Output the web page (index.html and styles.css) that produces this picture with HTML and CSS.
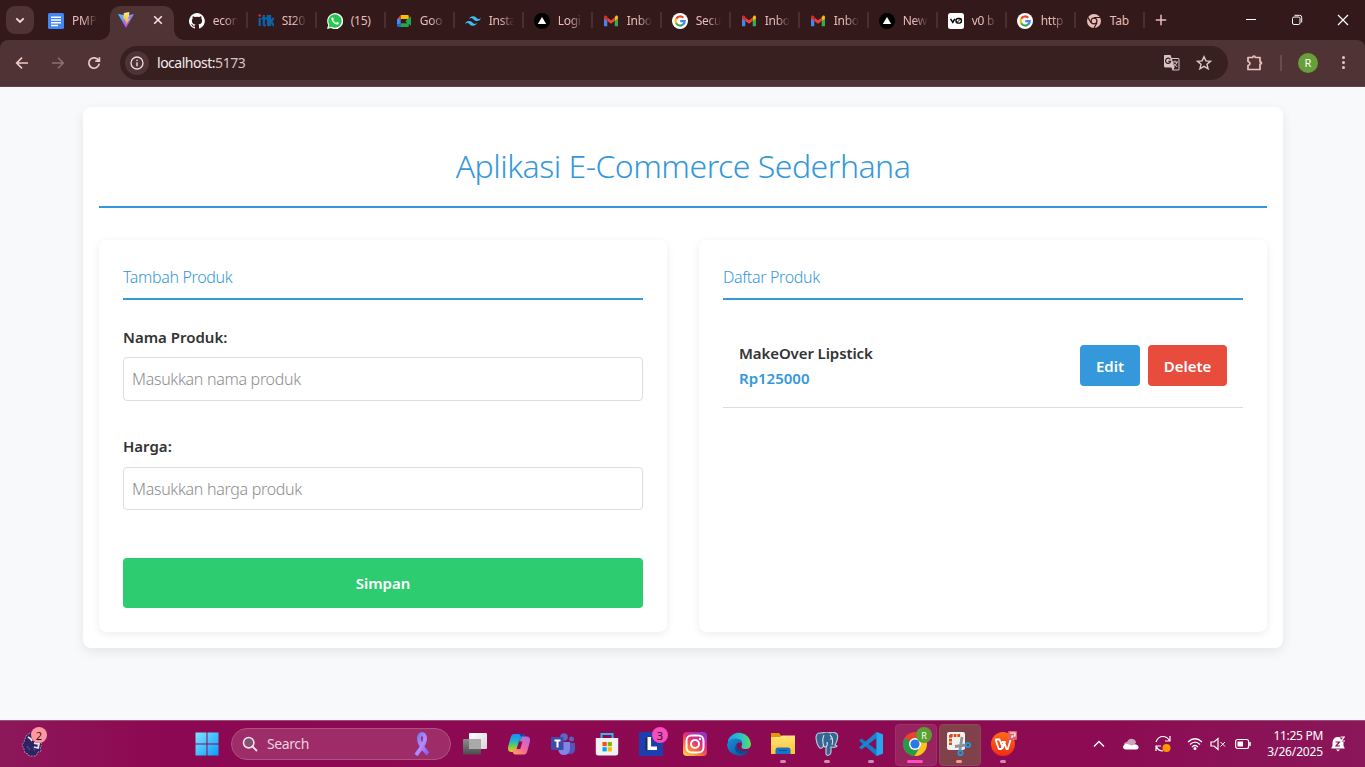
FILE: index.html
```html
<!DOCTYPE html>
<html lang="id">
<head>
<meta charset="utf-8">
<title>Aplikasi E-Commerce Sederhana</title>
<link rel="stylesheet" href="styles.css">
</head>
<body>
<svg class="defs" aria-hidden="true">
  <defs>
    <linearGradient id="vite-a" x1="0" y1="0" x2=".6" y2="1"><stop offset="0" stop-color="#41d1ff"/><stop offset="1" stop-color="#bd34fe"/></linearGradient>
    <linearGradient id="vite-b" x1="0" y1="0" x2="0" y2="1"><stop offset="0" stop-color="#ffea83"/><stop offset="1" stop-color="#ffa800"/></linearGradient>
    <linearGradient id="win" x1="0" y1="0" x2="1" y2="1"><stop offset="0" stop-color="#7fe4ff"/><stop offset="1" stop-color="#0a9bfd"/></linearGradient>
    <linearGradient id="ribbon" x1="0" y1="0" x2="1" y2="1"><stop offset="0" stop-color="#6a78e8"/><stop offset=".5" stop-color="#b38bff"/><stop offset="1" stop-color="#8a55f0"/></linearGradient>
    <linearGradient id="cop-a" x1="0" y1="0" x2="0" y2="1"><stop offset="0" stop-color="#1d8df5"/><stop offset=".4" stop-color="#1fb5c9"/><stop offset=".7" stop-color="#7ccb4a"/><stop offset="1" stop-color="#f6c320"/></linearGradient>
    <linearGradient id="cop-b" x1="1" y1="0" x2="0" y2="1"><stop offset="0" stop-color="#a66cf0"/><stop offset=".5" stop-color="#f2679b"/><stop offset="1" stop-color="#ffa552"/></linearGradient>
    <linearGradient id="ig" x1=".1" y1="1" x2=".8" y2="0"><stop offset="0" stop-color="#ffd34e"/><stop offset=".3" stop-color="#fb7a35"/><stop offset=".6" stop-color="#e42c78"/><stop offset="1" stop-color="#8a3ac8"/></linearGradient>
    <linearGradient id="edge-a" x1="0" y1="0" x2="1" y2="0"><stop offset="0" stop-color="#1d9fe0"/><stop offset=".6" stop-color="#2cc4c8"/><stop offset="1" stop-color="#66dc54"/></linearGradient>
    <linearGradient id="edge-b" x1="0" y1="0" x2="1" y2="1"><stop offset="0" stop-color="#1b8fdc"/><stop offset="1" stop-color="#0c4a92"/></linearGradient>
    <linearGradient id="folder" x1="0" y1="0" x2="0" y2="1"><stop offset="0" stop-color="#ffe27a"/><stop offset="1" stop-color="#ffc52f"/></linearGradient>
    <linearGradient id="view-a" x1="0" y1="0" x2="1" y2="1"><stop offset="0" stop-color="#fff"/><stop offset="1" stop-color="#d8d4d6"/></linearGradient>
    <linearGradient id="view-b" x1="0" y1="0" x2="0" y2="1"><stop offset="0" stop-color="#8d8d8d"/><stop offset="1" stop-color="#4c4c4c"/></linearGradient>
    <linearGradient id="wps" x1="0" y1="0" x2="0" y2="1"><stop offset="0" stop-color="#ff6a1c"/><stop offset="1" stop-color="#f22b12"/></linearGradient>
    <symbol id="google" viewBox="0 0 16 16"><circle cx="8" cy="8" r="8" fill="#fff"/><g fill="none" stroke-width="2.2"><path d="M4.2 5.7A4.5 4.5 0 0 1 11.3 4.8" stroke="#ea4335"/><path d="M4.2 5.7a4.6 4.6 0 0 0 0 4.6" stroke="#fbbc05"/><path d="M4.2 10.3A4.5 4.5 0 0 0 11.2 11.3" stroke="#34a853"/><path d="M8.2 8.1h4.5a4.6 4.6 0 0 1-1.6 3.3" stroke="#4285f4"/></g></symbol>
    <symbol id="gmail" viewBox="0 0 16 16"><path d="M1 4.6v8.7h3.3V7z" fill="#4285f4"/><path d="M15 4.6v8.7h-3.3V7z" fill="#34a853"/><path d="M11.7 4.5V8L15 5.6V4.2c0-1.5-1.5-2-2.5-1.3z" fill="#fbbc04"/><path d="M4.3 8V4.4L8 7.2l3.7-2.8V8L8 10.8z" fill="#ea4335"/><path d="M1 4.2c0-1.5 1.5-2 2.500-1.300l.8.6V8L1 5.600z" fill="#d93025"/></symbol>
    <symbol id="vercel" viewBox="0 0 16 16"><circle cx="8" cy="8" r="8" fill="#000"/><path d="M8 4l4.2 7H3.8z" fill="#fff"/></symbol>
  </defs>
</svg>

<div class="screen">
  <header class="tabstrip">
    <div class="tab-search"><svg width="12" height="12" viewBox="0 0 12 12"><path d="M2.300 4.300 6 8l3.700-3.700" fill="none" stroke="#f4dcd9" stroke-width="1.800"/></svg></div>
    <div class="tab tab-first"><svg viewBox="0 0 16 16"><rect width="16" height="16" rx="1.500" fill="#4285f4"/><path d="M3 4.200h10M3 7h10M3 9.800h10M3 12.600h7" stroke="#fff" stroke-width="1.500"/></svg><span>PMP</span></div>
    <div class="tab-active"><svg class="fav" viewBox="0 0 16 16"><path d="M0 2.100 8 16l8-13.900-7.800 1.300z" fill="url(#vite-a)"/><path d="M11.400 0 5.800 1.100l-.4 6.200 1.900-.4-.6 2.700 1.600-.5-.9 4.500 4.700-7-2 .4.8-2.700z" fill="url(#vite-b)"/></svg><svg class="close" viewBox="0 0 10 10"><path d="M1.200 1.200l7.600 7.600M8.800 1.200 1.200 8.800" stroke="#f6e2e0" stroke-width="1.600"/></svg></div>
    <div class="tab"><svg viewBox="0 0 16 16"><path fill="#fff" d="M8 0a8 8 0 0 0-2.500 15.600c.4.1.5-.2.5-.4v-1.500c-2.200.5-2.700-.9-2.700-.9-.4-.9-.9-1.200-.9-1.200-.7-.5.1-.5.1-.5.8.1 1.200.8 1.200.8.7 1.200 1.900.9 2.300.7.1-.5.3-.9.5-1.100-1.800-.2-3.600-.9-3.600-4 0-.9.3-1.600.8-2.100-.1-.2-.4-1 .1-2.100 0 0 .7-.2 2.200.8a7.500 7.500 0 0 1 4 0c1.500-1 2.200-.8 2.200-.8.4 1.100.2 1.900.1 2.100.5.6.8 1.300.8 2.100 0 3.100-1.900 3.700-3.700 3.900.3.3.6.8.6 1.500v2.200c0 .2.1.5.6.4A8 8 0 0 0 8 0z"/></svg><span>econ</span></div>
    <div class="tab"><svg viewBox="0 0 16 16"><g fill="none" stroke="#0c62a7" stroke-width="2.300"><path d="M1.700 5v8M5.800 2v9.500q0 1 2 .8M3.700 5.300h5M10 2v9.500q0 .8 1 .8M8.500 5.300h3M12 2v11M16 5l-3 3 3 5"/></g><circle cx="1.700" cy="2.500" r="1.300" fill="#e6232b"/></svg><span>SI20</span></div>
    <div class="tab"><svg viewBox="0 0 16 16"><path d="M0 16l1.200-4A8 8 0 1 1 4 14.900z" fill="#fff"/><path d="M1.600 14.400l.7-2.800a6.700 6.700 0 1 1 2.300 2.200z" fill="#25c74e"/><path d="M5.700 4.300c-.8 0-1.700 1.100-1.200 2.500.8 2.200 2.700 4 5 4.700 1.300.3 2.500-.5 2.300-1.800L10 8.700l-.9 1C7.700 9.100 6.700 8 6.200 7l.8-.9z" fill="#fff"/></svg><span class="tab-label">(15)</span></div>
    <div class="tab"><svg viewBox="0 0 16 16"><path d="M1 6.200 4.800 2v4.200z" fill="#ea4335"/><path d="M4.800 2h7q1 0 1 1v4l-2-1H4.800z" fill="#fbbc04"/><path d="M1 6h3.700v5.500H1z" fill="#4285f4"/><path d="M1 11h4v3H2q-1 0-1-1z" fill="#1967d2"/><path d="M4.700 10.300H11L9.500 8 15 3.300v9.400L12.800 11v2q0 1-1 1H4.700z" fill="#21a84a"/></svg><span>Goo</span></div>
    <div class="tab"><svg viewBox="0 0 16 16"><path fill="#38bdf8" d="M4 6.400Q5 3.200 8 3.200c3.200 0 3.600 2.400 5.200 2.800 1 .3 2-.2 2.800-1.200Q15 8 12 8C8.800 8 8.400 5.600 6.800 5.200c-1-.3-2 .2-2.800 1.200zM0 11.200Q1 8 4 8c3.200 0 3.600 2.400 5.200 2.800 1 .3 2-.2 2.800-1.200q-1 3.200-4 3.200c-3.200 0-3.600-2.400-5.200-2.800-1-.3-2 .2-2.800 1.200z"/></svg><span>Insta</span></div>
    <div class="tab"><svg><use href="#vercel"/></svg><span>Logi</span></div>
    <div class="tab"><svg><use href="#gmail"/></svg><span>Inbo</span></div>
    <div class="tab"><svg><use href="#google"/></svg><span>Secu</span></div>
    <div class="tab"><svg><use href="#gmail"/></svg><span>Inbo</span></div>
    <div class="tab"><svg><use href="#gmail"/></svg><span>Inbo</span></div>
    <div class="tab"><svg><use href="#vercel"/></svg><span>New</span></div>
    <div class="tab"><svg viewBox="0 0 16 16"><rect width="16" height="16" rx="2.500" fill="#fff"/><path d="M2.500 5.800l2.300 3.500 2-3.500" fill="none" stroke="#000" stroke-width="1.500"/><rect x="8" y="5.500" width="5.400" height="4.600" rx="2" fill="none" stroke="#000" stroke-width="1.400"/><path d="M8.800 9.700l4-4" stroke="#000"/></svg><span>v0 b</span></div>
    <div class="tab"><svg><use href="#google"/></svg><span>http</span></div>
    <div class="tab"><svg viewBox="0 0 16 16"><circle cx="8" cy="8" r="7" fill="#e8bdb9"/><path d="M8 4.500h6.500M5 9.700 1.800 4.200M11 9.700 8 15" stroke="#33191a" stroke-width="1.200"/><circle cx="8" cy="8" r="3.500" fill="#33191a"/><circle cx="8" cy="8" r="2.300" fill="#e8bdb9"/></svg><span class="tab-label">Tab</span></div>
    <div class="new-tab"><svg width="12" height="12" viewBox="0 0 12 12"><path d="M6 .8v10.400M.8 6h10.400" stroke="#e8bdb9" stroke-width="1.500"/></svg></div>
    <div class="window-buttons">
      <svg viewBox="0 0 12 12"><path d="M1 5.500h10" stroke="#fff"/></svg>
      <svg viewBox="0 0 12 12"><rect x="1.500" y="3" width="7.500" height="7.500" rx="1.500" fill="none" stroke="#fff"/><path d="M3.500 1.300h5.200a2 2 0 0 1 2 2v5.200" fill="none" stroke="#fff"/></svg>
      <svg viewBox="0 0 12 12"><path d="M1 1l10 10M11 1 1 11" stroke="#fff" stroke-width="1.200"/></svg>
    </div>
  </header>

  <div class="toolbar">
    <svg class="nav" viewBox="0 0 16 16"><path d="M14 8H3M8 2.700 2.700 8 8 13.300" fill="none" stroke="#efc9c6" stroke-width="1.700"/></svg>
    <svg class="nav dim" viewBox="0 0 16 16"><path d="M2 8h11M8 2.700 13.300 8 8 13.300" fill="none" stroke="#efc9c6" stroke-width="1.500"/></svg>
    <svg class="nav" viewBox="0 0 16 16"><path d="M12.600 5.500A5.200 5.200 0 1 0 13.200 8.700M13.400 2.200v4H9.300" fill="none" stroke="#efc9c6" stroke-width="1.700"/></svg>
    <div class="omnibox">
      <div class="site-info"><svg width="14" height="14" viewBox="0 0 14 14"><circle cx="7" cy="7" r="6" fill="none" stroke="#eadedd" stroke-width="1.300"/><path d="M7 6.200v4M7 3.700v1.400" stroke="#eadedd" stroke-width="1.400"/></svg></div>
      <div class="url">localhost:<span>5173</span></div>
      <svg class="translate" viewBox="0 0 18 18"><path d="M1.500 1h6l1 3H15q1.500 0 1.500 1.500v9.500q0 1.500-1.500 1.500H9.500l-1-3h-6Q1 13.500 1 12V1.500z" fill="#d5c5c4"/><path d="M9 5h6.500v10.500h-5l1-2z" fill="#382020"/><path d="M7.300 5.300a2.600 2.600 0 1 0 .4 2H5.300" fill="none" stroke="#382020" stroke-width="1.200"/><path d="M9 8h6M12 6.500V8M14 8q-.7 3-3 4.500M10.700 9.500l3.500 3.500" fill="none" stroke="#d5c5c4"/></svg>
      <svg class="star" viewBox="0 0 16 16"><path d="M8 1.700l1.900 4.200 4.600.4-3.500 3 1.100 4.500L8 11.400l-4.100 2.400L5 9.300l-3.500-3 4.600-.4z" fill="none" stroke="#dccbca" stroke-width="1.400"/></svg>
    </div>
    <svg class="extensions" viewBox="0 0 18 18"><path d="M2 3.500h4.800c.1-2 2.300-2 2.400 0H14v4.300c2 .1 2 2.300 0 2.400v5.300H2v-4c2.600-.5 2.600-3.500 0-4z" fill="none" stroke="#efc2be" stroke-width="1.700" stroke-linejoin="round"/></svg>
    <i class="tool-divider"></i>
    <div class="avatar">R</div>
    <div class="more"><i></i><i></i><i></i></div>
  </div>

  <main class="page">
    <div class="container">
      <h1>Aplikasi E-Commerce Sederhana</h1>
      <div class="columns">
        <section class="card">
          <h2 class="form-title">Tambah Produk</h2>
          <form>
            <label class="name-label" for="nama">Nama Produk:</label>
            <input class="name-input" id="nama" placeholder="Masukkan nama produk">
            <label class="price-label" for="harga">Harga:</label>
            <input class="price-input" id="harga" placeholder="Masukkan harga produk">
            <button class="save" type="button">Simpan</button>
          </form>
        </section>
        <section class="card">
          <h2 class="list-title">Daftar Produk</h2>
          <div class="product">
            <div class="product-info"><div class="product-name">MakeOver Lipstick</div><div class="product-price">Rp125000</div></div>
            <button class="edit" type="button">Edit</button>
            <button class="delete" type="button">Delete</button>
          </div>
        </section>
      </div>
    </div>
  </main>

  <footer class="taskbar">
    <div class="widget"><svg width="24" height="26" viewBox="0 0 24 26"><path d="M5 5l4-3 9 3 1 5 2 4-2 2 1 4-3 1-2 4H8l-1-2-3-1-1-4-2-4 2-3z" fill="#2c2360" stroke="#b69cc4" stroke-width=".8" stroke-dasharray="2 1"/><path d="M7 6l3 2 1 2M13 12l5 1-1 4-4-1" fill="none" stroke="#e9e4f5" stroke-width="1.800"/><path d="M6 15l3 4m3-3 2 4" stroke="#50408c" stroke-width="1.500"/></svg><b class="badge two">2</b></div>
    <div class="start"><svg width="24" height="24" viewBox="0 0 24 24"><path d="M.5.500h11v11H.5zM12.500.500h11v11h-11zM.5 12.500h11v11H.5zM12.500 12.500h11v11h-11z" fill="url(#win)"/></svg></div>
    <div class="search"><svg width="16" height="16" viewBox="0 0 16 16"><circle cx="6.700" cy="6.700" r="5.200" fill="#875071" stroke="#f1e5ec" stroke-width="1.600"/><path d="M10.500 10.500 15 15" stroke="#f1e5ec" stroke-width="1.800"/></svg><span>Search</span><svg class="ribbon" width="20" height="24" viewBox="0 0 20 24"><path d="M4 23Q9 17 12 11q2-5 0-8-2-2-4 0-2 3 0 8 3 6 8 11" fill="none" stroke="url(#ribbon)" stroke-width="4"/></svg></div>
    <div class="apps">
      <div class="app"><svg viewBox="0 0 24 24"><rect x="6" y="1" width="18" height="16" rx="1" fill="url(#view-a)"/><rect y="7" width="18" height="15.500" rx="1" fill="url(#view-b)"/><path d="M6 7h12v10H6z" fill="#aaa"/></svg></div>
      <div class="app"><svg viewBox="0 0 24 24"><path d="M7 2h8.500q2 0 2.600 2l.7 2.500h-2.300q-2 0-2.800 3L11.500 17q-.8 3-3.500 3H4.500Q0 20 1.200 14.500L3.500 6Q4.500 2 7 2z" fill="url(#cop-a)"/><path d="M12.500 2h3q2 0 2.600 2l.7 2.500h-4.500z" fill="#1743b8"/><path d="M17 22.500H8.500q-2 0-2.600-2L5.200 18h2.300q2 0 2.800-3l2.200-7.500q.8-3 3.500-3h3.500q4.500 0 3.300 5.500l-2.300 8.500q-1 4-3.500 4z" fill="url(#cop-b)"/><path d="M12.500 4.500h3.700q-1.500.8-2.200 3l-.7 2.500h-2z" fill="#1599d2"/><path d="M11.800 9.500h3.700l-2.200 7.500H9.600z" fill="#8e0b55"/></svg></div>
      <div class="app"><svg viewBox="0 0 24 24"><circle cx="13" cy="5" r="3.800" fill="#5b68c5"/><circle cx="20.500" cy="7" r="2.500" fill="#5b61bd"/><path d="M16 11h8v7q-1 4-5 4h-3z" fill="#5058b6"/><path d="M7 10h12v7q-1 6-6 6t-6-6z" fill="#8185e6"/><rect y="5" width="12.500" height="13" rx="1" fill="#414ba5"/><path d="M3.500 8.500h6M6.500 8.500v7" stroke="#fff" stroke-width="2"/></svg></div>
      <div class="app"><svg viewBox="0 0 24 24"><path d="M6.500 7V2h11v5" fill="none" stroke="#31b8ef" stroke-width="2"/><path d="M.8 6h22.400v15q0 2.500-2.500 2.500H3.300Q.8 23.500.8 21z" fill="#f3f1f2"/><path d="M7.500 10h4.200v4.200H7.500z" fill="#f25022"/><path d="M12.700 10h4.200v4.200h-4.200z" fill="#7fba00"/><path d="M7.500 15.200h4.200v4.200H7.500z" fill="#00a4ef"/><path d="M12.700 15.200h4.200v4.200h-4.200z" fill="#ffb900"/></svg></div>
      <div class="app"><svg viewBox="0 0 24 24"><path d="M0 0h24v24H0z" fill="#1d3eae"/><path d="M8 5v14l-1.500-1V6z" fill="#17322f"/><path d="M10.300 5v11.300H18" fill="none" stroke="#fff" stroke-width="3.500"/></svg><b class="badge three">3</b></div>
      <div class="app"><svg viewBox="0 0 24 24"><rect width="24" height="24" rx="4" fill="url(#ig)"/><rect x="3.500" y="3.500" width="17" height="17" rx="5" fill="none" stroke="#fff" stroke-width="2"/><circle cx="12" cy="12" r="4" fill="none" stroke="#fff" stroke-width="2"/><circle cx="17" cy="7" r="1.200" fill="#fff"/></svg></div>
      <div class="app"><svg viewBox="0 0 24 24"><path d="M1 8A12 12 0 0 1 24 12q0 5-5.500 5-4.500 0-4-2.500Q17 8 10 7 4 6.500 1 12z" fill="url(#edge-a)"/><path d="M0 13Q1 6 9 6.500q6 .5 6 5-3-2-5 0-2 4 2 7 4 3 10 0-4 6-11 5Q1 22 0 13z" fill="url(#edge-b)"/><path d="M10 10.500q-2 4 2 7 4 3 9.500 1-5 5-10 3-6-3-1.500-11z" fill="#0b4c91"/></svg></div>
      <div class="app running"><svg viewBox="0 0 24 24"><path d="M0 1h8l2.500 3H21v6H0z" fill="#d99b09"/><path d="M0 5h9l2-1.500h13V22H0z" fill="url(#folder)"/><path d="M4.500 22v-4q0-2.500 2.500-2.500h10q2.500 0 2.500 2.500v4z" fill="#1275ca"/><path d="M8 18.500h8" stroke="#064a8c"/></svg></div>
      <div class="app running"><svg viewBox="0 0 24 24"><path d="M5 1Q1 1 1 6q1 8 4 10 2 1 3.500-2 1 1 2.500 1v7q1 2 3 1 2-.5 2-3v-5q5 1 6-1l-2-1q4-7 2-11-3-3-7-1-3-2-6-.5Q7 1 5 1z" fill="#336791" stroke="#b9c6d4" stroke-width="1.200"/><path d="M9 3Q7 7 8 11q1 2 0 3M15 3q4 4 2 10M11 15q2-2 1-5M15 7h2" fill="none" stroke="#d5dfeb" stroke-width="1.100"/></svg></div>
      <div class="app running"><svg viewBox="0 0 24 24"><path d="M17.500 0 24 2.500v19L17.500 24 0 8.500 2.500 6.500 17.500 18z" fill="#0e7fc8"/><path d="M17.500 0v6L2.500 17.500 0 15.500z" fill="#1487d0"/><path d="M17.500 0 24 2.500v19L17.500 24z" fill="#28a5ef"/></svg></div>
      <div class="app running chrome"><svg viewBox="0 0 24 24"><circle cx="12" cy="12" r="12" fill="#e94235"/><path d="M12 12 1.600 6A12 12 0 0 0 11.500 24L17 15z" fill="#249b4a"/><path d="M12 6.500h10.600A12 12 0 0 1 11.500 24L17 15z" fill="#fcc31e"/><circle cx="12" cy="12" r="6" fill="#fff"/><circle cx="12" cy="12" r="4.600" fill="#2878e8"/></svg><b class="badge profile">R</b></div>
      <div class="app running snip"><svg viewBox="0 0 24 24"><rect width="18" height="18" rx="2" fill="#f3f0ef"/><path d="M3 3.500h11M3.500 3v11" fill="none" stroke="#d44b20" stroke-width="3" stroke-dasharray="2.700 1"/><path d="M15 5l-2 13M8 14.500l11-1.500" stroke="#8c9499" stroke-width="2.800"/><circle cx="21" cy="13" r="2.200" fill="none" stroke="#209bda" stroke-width="1.800"/><circle cx="13.500" cy="21" r="2.200" fill="none" stroke="#209bda" stroke-width="1.800"/></svg></div>
      <div class="app running"><svg viewBox="0 0 24 24"><circle cx="12" cy="12" r="12" fill="url(#wps)"/><path d="M4 7.500h4.500l3.300 8.500 2.300-6h-3.600M4.500 7.500 7.800 17h2.700l2.700-7 2.300 7h1.300L19.500 8" fill="none" stroke="#fff" stroke-width="1.800" stroke-linejoin="round"/></svg><svg class="wps-badge" viewBox="0 0 9 9"><rect width="9" height="9" rx="1" fill="#e0636c"/><path d="M2 2h5v3H4v2" fill="none" stroke="#fff" stroke-width="1.200"/></svg></div>
    </div>
    <div class="tray">
      <svg class="chevron" viewBox="0 0 12 12"><path d="M1 8.500 6 3.500l5 5" fill="none" stroke="#fff" stroke-width="1.400"/></svg>
      <svg class="cloud" viewBox="0 0 18 12"><path d="M2 7Q2 4 5 4q2-4 6-3 3 1 3 4l-5 3z" fill="#cfa4bb"/><path d="M4 11.500q-3 0-3-3 1-3 4-2.500 3 .5 5 1.500 2-2 4-1 3 1 2.500 3.500-.5 1.500-2.500 1.500z" fill="#fff"/></svg>
      <svg class="sync" viewBox="0 0 18 18"><path d="M2 7Q4 1.500 9 1.500q4 0 6.500 4M16 1v5h-5M2 16v-5h5M2.500 11.500Q4 16 9 16" fill="none" stroke="#fff" stroke-width="1.200"/><circle cx="12.500" cy="13" r="4" fill="#ff9800"/></svg>
      <svg class="wifi" viewBox="0 0 16 14"><g fill="none" stroke="#fff" stroke-width="1.300"><path d="M1 5q7-6.500 14 0M3 7.500q5-4.700 10 0M5 10q3-3 6 0"/></g><circle cx="8" cy="11.500" r="1.500" fill="#fff"/></svg>
      <svg class="sound" viewBox="0 0 16 14"><path d="M1 5h3l4-3.500v11L4 9H1z" fill="none" stroke="#fff" stroke-width="1.200"/><path d="M10.500 5l4.500 4.500m0-4.500-4.500 4.500" stroke="#fff"/></svg>
      <svg class="battery" viewBox="0 0 16 12"><rect x=".6" y="1.500" width="13" height="9" rx="2" fill="none" stroke="#fff" stroke-width="1.200"/><path d="M2.500 3.500H8v5H2.500z" fill="#fff"/><path d="M15 4v4" stroke="#fff" stroke-width="1.500"/></svg>
      <div class="clock"><div class="time">11:25 PM</div><div class="date">3/26/2025</div></div>
      <svg class="bell" viewBox="0 0 14 16"><path d="M1.500 6.500Q2 1 7 1q5 0 5.500 5.500V10l1 1.500v1H.5v-1l1-1.500zM5 13.500h4L7 15.500z" fill="#fff"/><path d="M4.500 6h4L5 10h4" fill="none" stroke="#881358" stroke-width="1.200"/><path d="M8.500 0H14v6h-3z" fill="#8a1558"/><path d="M9.500 1h3.800L10 5h4" fill="none" stroke="#fff" stroke-width="1.200"/></svg>
    </div>
  </footer>
</div>
</body>
</html>
```
FILE: styles.css
```css
* { box-sizing: border-box; }
body { margin: 0; font-family: "Noto Sans", "Open Sans", sans-serif; overflow: hidden; }
svg { display: block; flex: none; }
.defs { position: absolute; width: 0; height: 0; }
.screen { display: flex; flex-direction: column; width: 1365px; height: 767px; background: #f8f9fb; }

/* Browser tabs */
.tabstrip { display: flex; height: 40px; padding-left: 6px; background: #33191a; flex: none; }
.tab-search { display: flex; align-items: center; justify-content: center; width: 28px; height: 28px; margin: 6px 5px 0 0; border-radius: 9px; background: #503334; }
.tab { position: relative; display: flex; align-items: center; width: 69px; height: 40px; padding: 1px 0 0 9.700px; flex: none; font-size: 12px; letter-spacing: -.25px; color: #e8bdb9; }
.tab svg { width: 16px; height: 16px; }
.tab span { width: 28px; margin-left: 8px; white-space: nowrap; mask-image: linear-gradient(90deg, #000 40%, transparent 90%); }
.tab .tab-label { mask-image: none; }
.tab::after { content: ""; position: absolute; right: 0; top: 12px; width: 2px; height: 16px; background: #4b2e2f; }
.tab-first { width: 71px; padding-left: 9px; }
.tab-first::after { display: none; }
.tab-active { position: relative; display: flex; align-items: center; width: 64px; height: 34px; margin: 6px 5px 0 0; padding: 0 11px 6px 8px; border-radius: 10px 10px 0 0; background: #503334; flex: none; justify-content: space-between; }
.tab-active::before, .tab-active::after { content: ""; position: absolute; bottom: 0; width: 10px; height: 10px; }
.tab-active::before { left: -10px; background: radial-gradient(circle at 0 0, transparent 9.500px, #503334 10px); }
.tab-active::after { right: -10px; background: radial-gradient(circle at 100% 0, transparent 9.500px, #503334 10px); }
.fav { width: 16px; height: 16px; }
.close { width: 10px; height: 10px; }
.new-tab { display: flex; align-items: center; margin-left: 10px; }
.window-buttons { display: flex; align-items: center; gap: 34px; margin-left: auto; padding-right: 16px; }
.window-buttons svg { width: 12px; height: 12px; }

/* Address toolbar */
.toolbar { display: flex; align-items: center; height: 47px; padding: 0 17px 1px 14px; border-bottom: 1px solid #5b4744; border-radius: 8px 8px 0 0; background: #503334; flex: none; box-shadow: 0 -8px 0 0 #33191a; }
.tabstrip { position: relative; z-index: 1; }
.nav { width: 16px; height: 16px; margin-right: 20px; }
.nav.dim { opacity: .4; }
.omnibox { display: flex; align-items: center; width: 1108px; height: 34px; margin-left: -2px; padding: 0 16px 0 5px; border-radius: 17px; background: #382020; }
.site-info { display: flex; align-items: center; justify-content: center; width: 24px; height: 24px; border-radius: 50%; background: #503334; }
.url { margin-left: 8px; font-size: 14px; letter-spacing: -.48px; color: #f5ebea; }
.url span { color: #d6c4c3; }
.translate { width: 18px; height: 18px; margin-left: auto; }
.star { width: 16px; height: 16px; margin-left: 15px; }
.extensions { width: 18px; height: 18px; margin-left: 18px; }
.tool-divider { width: 2px; height: 16px; margin-left: 16px; background: #6b4c4d; }
.avatar { display: flex; align-items: center; justify-content: center; width: 20px; height: 20px; margin-left: 16px; border-radius: 50%; background: #689f38; color: #fff; font-size: 11px; }
.more { display: flex; flex-direction: column; gap: 2px; margin-left: auto; padding: 0 3px; }
.more i { width: 3px; height: 3px; border-radius: 50%; background: #efc2be; }

/* Store page */
.page { height: 633px; padding: 20px 82px 0 83px; flex: none; }
.container { width: 1200px; height: 541px; padding: 16px; border-radius: 8px; background: #fff; box-shadow: 0 4px 12px rgba(0,0,0,.08); }
h1 { height: 85px; margin: 0 0 32px; padding-top: 20px; border-bottom: 2px solid #3498db; font-size: 32px; line-height: 45px; font-weight: 350; letter-spacing: -.5px; text-align: center; color: #3498db; white-space: nowrap; }
.columns { display: grid; grid-template-columns: 1fr 1fr; gap: 32px; }
.card { height: 392px; padding: 24px; border-radius: 8px; background: #fff; box-shadow: 0 2px 8px rgba(0,0,0,.08); }
h2 { height: 36px; margin: 0; border-bottom: 2px solid #3498db; font-size: 16px; line-height: 27px; font-weight: 350; letter-spacing: -.35px; color: #3498db; }
form { display: flex; flex-direction: column; padding-top: 24px; }
label { height: 25px; font-size: 15px; line-height: 27px; font-weight: 600; color: #333; }
.price-label { line-height: 25px; }
input { height: 44px; margin: 8px 0 33px; padding: 0 8px; border: 1px solid #ddd; border-radius: 4px; background: #fff; font-family: inherit; font-size: 16px; font-weight: 350; letter-spacing: -.3px; outline: 0; }
input::placeholder { color: #8c8c8c; opacity: 1; }
.price-input { height: 43px; margin-bottom: 48px; padding-top: 1px; }
button { border: 0; border-radius: 4px; color: #fff; font-family: inherit; font-size: 15px; font-weight: 600; padding: 1px 0 0; }
.save { height: 50px; padding: 0; background: #2ecc71; }
.product { display: flex; align-items: center; height: 84px; margin-top: 24px; padding: 0 16px; border-bottom: 1px solid #ddd; }
.product-info { width: 341px; font-size: 15px; line-height: 25px; font-weight: 600; }
.product-name { color: #333; letter-spacing: -.1px; }
.product-price { color: #3498db; }
.edit { width: 60px; height: 41px; background: #3498db; }
.delete { width: 79px; height: 41px; margin-left: 8px; background: #e74c3c; }

/* Taskbar */
.taskbar { display: flex; align-items: flex-start; height: 47px; background: linear-gradient(90deg, #8c185a 0, #8d0852 12%, #8c0b53 80%, #8a1759 100%); border-top: 1px solid #9d5075; color: #fff; flex: none; }
.widget { position: relative; width: 172px; padding: 10px 0 0 21px; }
.badge { position: absolute; display: flex; align-items: center; justify-content: center; width: 16px; height: 16px; border-radius: 50%; font-size: 11px; font-weight: 400; color: #251323; }
.two { left: 31px; top: 6px; background: #ff989e; }
.start { width: 59px; padding: 11px 0 0 22.500px; }
.search { display: flex; align-items: center; width: 220px; height: 32px; margin-top: 7px; padding: 0 18px 0 10px; border: 1px solid #ac5381; border-radius: 16px; background: #9d2c68; font-size: 14px; color: #ead4df; }
.search span { margin-left: 9px; padding-bottom: 1px; letter-spacing: -.4px; }
.ribbon { margin-left: auto; }
.apps { display: flex; margin-left: 2px; }
.app { position: relative; display: flex; justify-content: center; width: 44px; height: 46px; padding-top: 11px; }
.app > svg { width: 24px; height: 24px; z-index: 1; }
.app.running::after { content: ""; position: absolute; left: 19px; top: 39px; width: 6px; height: 3px; border-radius: 2px; background: #c98fb2; z-index: 2; }
.three { left: 23px; top: 6px; background: #f74dbd; z-index: 2; }
.chrome::before, .snip::before { content: ""; position: absolute; left: 2px; top: 3px; width: 40px; height: 40px; border: 1px solid #99346b; border-radius: 4px; background: #97245f; }
.snip::before { background: #80414b; border-color: #8c4a55; }
.app.chrome::after { left: 14px; width: 16px; background: #ff4ec5; }
.app.snip::after { background: #ff989e; }
.profile { left: 23px; top: 6px; background: #5c9f32; color: #fff; font-size: 9px; z-index: 2; }
.app .wps-badge { position: absolute; left: 27px; top: 10px; width: 9px; height: 9px; }
.tray { display: flex; align-items: center; height: 46px; margin-left: auto; padding-right: 20px; }
.chevron { width: 12px; height: 12px; }
.cloud { width: 18px; height: 12px; margin-left: 17px; }
.sync { width: 18px; height: 18px; margin-left: 14px; }
.wifi { width: 16px; height: 14px; margin-left: 15px; }
.sound { width: 16px; height: 14px; margin-left: 7px; }
.battery { width: 16px; height: 12px; margin-left: 9px; }
.clock { width: 64px; margin-left: 8px; font-size: 12px; line-height: 16px; text-align: right; white-space: nowrap; }
.time { letter-spacing: -.3px; }
.date { letter-spacing: -.15px; }
.bell { width: 14px; height: 16px; margin-left: 8px; }
```
